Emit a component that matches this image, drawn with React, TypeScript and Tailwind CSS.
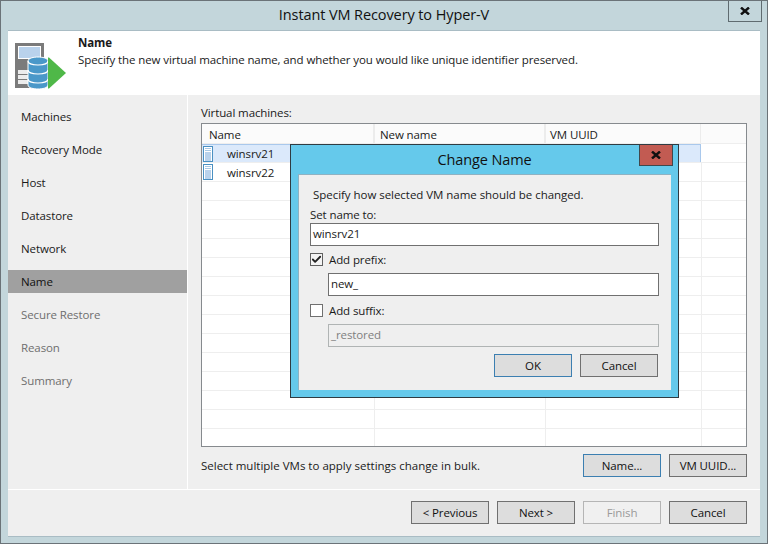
import React from "react";
import { Check } from "lucide-react";

const navItems = [
  { label: "Machines" },
  { label: "Recovery Mode" },
  { label: "Host" },
  { label: "Datastore" },
  { label: "Network" },
  { label: "Name", active: true },
  { label: "Secure Restore", disabled: true },
  { label: "Reason", disabled: true },
  { label: "Summary", disabled: true },
];

const vms = ["winsrv21", "winsrv22"];
const emptyRows = [0, 1, 2, 3, 4, 5, 6, 7, 8, 9, 10, 11, 12, 13];

function Btn({ label, focus, disabled }: { label: string; focus?: boolean; disabled?: boolean }) {
  let cls = "border-[#707070] bg-[#dddddd] text-[#111111]";
  if (focus) cls = "border-[#3c7fb1] bg-[#dddddd] text-[#111111]";
  if (disabled) cls = "border-[#b5b5b5] bg-[#f0f0f0] text-[#9a9a9a]";
  return (
    <div className={`w-[78px] h-[23px] border flex items-center justify-center ${cls}`}>{label}</div>
  );
}

function CloseGlyph() {
  return (
    <svg width="10" height="8" viewBox="0 0 10 8" className="block">
      <path d="M1 0.5l8 7M9 0.5l-8 7" stroke="#111111" strokeWidth="2.4" fill="none" />
    </svg>
  );
}

function WizardIcon() {
  return (
    <svg width="52" height="46" viewBox="0 0 52 46" className="block">
      <rect x="0" y="0" width="29" height="45" fill="#7b7b7b" />
      <rect x="3.5" y="3.5" width="22" height="12" fill="#b9d2ec" stroke="#ffffff" strokeWidth="1" />
      <rect x="3" y="27" width="10" height="4" fill="#ececec" />
      <rect x="3" y="32" width="10" height="4" fill="#ececec" />
      <rect x="3" y="37" width="10" height="4" fill="#ececec" />
      <path d="M13 18c0-3 6-4 10-4s10 1 10 4v24c0 3-6 4-10 4s-10-1-10-4z" fill="#4a98c9" stroke="#ffffff" strokeWidth="1" />
      <path d="M13 18c0 3 6 4 10 4s10-1 10-4M13 27c0 3 6 4 10 4s10-1 10-4M13 36c0 3 6 4 10 4s10-1 10-4" fill="none" stroke="#ffffff" strokeWidth="1.2" />
      <path d="M33 14.5v31h1l17-15.5-17-15.5z" fill="#4fb848" />
    </svg>
  );
}

function VmIcon() {
  return (
    <div className="w-[10px] h-[16px] border border-[#4a90c2] bg-white px-[1px] pt-[1px] flex flex-col gap-[1px]">
      <div className="h-[1px] bg-[#a9c8e4]" />
      <div className="h-[1px] bg-[#a9c8e4]" />
      <div className="flex-1 bg-[#b9d2ec]" />
    </div>
  );
}

export default function App() {
  return (
    <div
      className="relative w-[768px] h-[544px] overflow-hidden border border-[#6b7378] bg-[#c3d6db] flex flex-col text-[11.5px] tracking-[-0.1px] leading-[16px] text-[#1a1a1a]"
      style={{ fontFamily: '"Open Sans", "Noto Sans", sans-serif' }}
    >
      {/* Title bar */}
      <div className="h-[29px] shrink-0 relative flex items-center justify-center pb-[1px] text-[14.5px] text-[#111111]">
        Instant VM Recovery to Hyper-V
        <div className="absolute right-[5px] top-0 w-[34px] h-[21px] border-x border-b border-[#5f6b70] bg-[#c3d6db] flex items-center justify-center">
          <CloseGlyph />
        </div>
      </div>

      <div className="mx-[7px] mb-[6px] flex-1 flex flex-col border-y border-[#a9bcc4] bg-[#efefef] min-h-0">
        {/* Header */}
        <div className="h-[64px] shrink-0 bg-white flex pl-[7px] pt-[12px]">
          <WizardIcon />
          <div className="ml-[11px] -mt-[9px]">
            <div className="font-bold h-[18px] leading-[18px]">Name</div>
            <div>Specify the new virtual machine name, and whether you would like unique identifier preserved.</div>
          </div>
        </div>

        <div className="flex-1 flex min-h-0">
          {/* Left nav */}
          <div className="w-[180px] shrink-0 border-r border-white pt-[10px]">
            {navItems.map((item) => (
              <div
                key={item.label}
                className={`h-[23px] mb-[10px] pl-[13px] flex items-center ${
                  item.active ? "bg-[#a0a0a0] text-[#111111]" : ""
                } ${item.disabled ? "text-[#6e6e6e]" : ""}`}
              >
                {item.label}
              </div>
            ))}
          </div>

          {/* Content */}
          <div className="flex-1 pl-[13px] pr-[13px] pt-[10px] min-w-0">
            <div className="h-[16px] mb-[2px]">Virtual machines:</div>
            <div className="h-[324px] border border-[#868a8e] bg-white overflow-hidden">
              <div className="flex h-[20px] border-b border-[#eeeeee] bg-[#fbfbfb]">
                <div className="w-[172px] ml-[1px] pl-[6px] pt-[2px] border-r-2 border-[#ececec] flex items-center">Name</div>
                <div className="w-[171px] pl-[5px] pt-[2px] border-r-2 border-[#ececec] flex items-center">New name</div>
                <div className="w-[155px] pl-[4px] pt-[2px] border-r border-[#ececec] flex items-center">VM UUID</div>
              </div>
              {vms.map((vm, i) => (
                <div key={vm} className="flex h-[19px] border-b border-[#eeeeee]">
                  <div className={`flex w-[499px] ${i === 0 ? "bg-[#dbe9fb] border-t border-r border-[#a9c8ec]" : ""}`}>
                    <div className="w-[173px] pl-[1px] flex items-center">
                      <VmIcon />
                      <span className="ml-[14px] pt-[1px]">{vm}</span>
                    </div>
                    <div className={`w-[171px] border-l ${i === 0 ? "border-transparent" : "border-[#eeeeee]"}`} />
                    <div className={`w-[155px] border-l ${i === 0 ? "border-transparent" : "border-[#eeeeee]"}`} />
                  </div>
                  {i > 0 && <div className="w-[1px] bg-[#eeeeee]" />}
                </div>
              ))}
              {emptyRows.map((r) => (
                <div key={r} className="flex h-[19px] border-b border-[#eeeeee]">
                  <div className="w-[173px] border-r border-[#eeeeee]" />
                  <div className="w-[171px] border-r border-[#eeeeee]" />
                  <div className="w-[156px] border-r border-[#eeeeee]" />
                </div>
              ))}
            </div>
            <div className="flex items-center justify-between mt-[7px]">
              <span className="pt-[1px] tracking-[0px]">Select multiple VMs to apply settings change in bulk.</span>
              <div className="flex gap-[8px] tracking-[-0.1px]">
                <Btn label="Name..." focus />
                <Btn label="VM UUID..." />
              </div>
            </div>
          </div>
        </div>

        {/* Footer */}
        <div className="h-[47px] shrink-0 border-t border-white flex items-start justify-end gap-[8px] pt-[11px] pr-[13px]">
          <Btn label="< Previous" />
          <Btn label="Next >" />
          <Btn label="Finish" disabled />
          <Btn label="Cancel" />
        </div>
      </div>

      {/* Change Name dialog */}
      <div className="absolute left-[289px] top-[143px] w-[389px] h-[254px] border border-[#2f3b42] bg-[#65c9eb] flex flex-col">
        <div className="h-[29px] shrink-0 relative flex items-center justify-center text-[14.5px] text-[#111111]">
          Change Name
          <div className="absolute right-[5px] top-0 w-[34px] h-[21px] border-x border-b border-[#40484c] bg-[#c25b52] flex items-center justify-center">
            <CloseGlyph />
          </div>
        </div>
        <div className="mx-[7px] mb-[7px] flex-1 border-t border-l border-[#8fb2c2] bg-[#efefef] pl-[11px] pr-[12px] pt-[12px]">
          <div className="pl-[3px] h-[16px] tracking-[-0.04px]">Specify how selected VM name should be changed.</div>
          <div className="mt-[4px] h-[16px]">Set name to:</div>
          <div className="h-[23px] border border-[#707070] bg-white pl-[2px] pb-[1px] flex items-center">winsrv21</div>
          <div className="mt-[7px] h-[13px] flex items-center">
            <div className="w-[13px] h-[13px] border border-[#606060] bg-[#f4f4f4] flex items-center justify-center">
              <Check size={11} strokeWidth={4} className="text-[#222222]" />
            </div>
            <span className="ml-[6px]">Add prefix:</span>
          </div>
          <div className="ml-[18px] mt-[7px] h-[23px] border border-[#707070] bg-white pl-[2px] pb-[1px] flex items-center">new_</div>
          <div className="mt-[8px] h-[13px] flex items-center">
            <div className="w-[13px] h-[13px] border border-[#707070] bg-white" />
            <span className="ml-[6px]">Add suffix:</span>
          </div>
          <div className="ml-[18px] mt-[7px] h-[23px] border border-[#b0b4b4] bg-[#efefef] pl-[2px] pb-[1px] flex items-center text-[#7f7f7f]">_restored</div>
          <div className="mt-[7px] flex justify-end gap-[8px] pr-[1px]">
            <Btn label="OK" focus />
            <Btn label="Cancel" />
          </div>
        </div>
      </div>
    </div>
  );
}
